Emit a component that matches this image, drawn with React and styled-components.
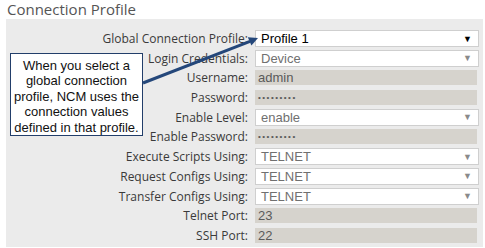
import styled, { createGlobalStyle } from 'styled-components';

const GlobalStyle = createGlobalStyle`
  html, body {
    margin: 0;
    padding: 0;
    background: #ffffff;
  }
`;

const Page = styled.div`
  position: relative;
  width: 485px;
  height: 248px;
  overflow: hidden;
`;

const Title = styled.h2`
  margin: 0;
  padding: 0 0 0 7px;
  height: 19px;
  font-family: 'Open Sans', sans-serif;
  font-weight: 400;
  font-size: 15px;
  line-height: 19px;
  color: #555;
`;

const Panel = styled.div`
  margin-left: 6px;
  width: 477px;
  height: 228px;
  box-sizing: border-box;
  padding: 11px 4px 3px 0;
  background: #ebebeb;
  display: grid;
  grid-template-columns: 242px 1fr;
  grid-auto-rows: 17px;
  column-gap: 7px;
  row-gap: 2.7px;
`;

const Label = styled.div`
  font-family: 'Open Sans', sans-serif;
  font-size: 12px;
  color: #3a3a3a;
  text-align: right;
  line-height: 17px;
  white-space: nowrap;
`;

const Select = styled.div`
  display: flex;
  align-items: center;
  justify-content: space-between;
  box-sizing: border-box;
  height: 17px;
  padding: 0 6px 0 5px;
  background: #fff;
  border: 1px solid #cfcfcf;
  font-family: 'Liberation Sans', Arial, sans-serif;
  font-size: 13px;
  color: ${(p) => (p.$active ? '#000' : '#707070')};
`;

const Caret = styled.span`
  font-size: 9px;
  color: ${(p) => (p.$active ? '#000' : '#8a8a8a')};
`;

const Field = styled.div`
  align-self: center;
  height: 15px;
  margin-right: 2px;
  padding-left: 3px;
  background: #d6d3cd;
  font-family: 'Liberation Sans', Arial, sans-serif;
  font-size: ${(p) => (p.$secret ? '8px' : '13px')};
  letter-spacing: ${(p) => (p.$secret ? '1.5px' : '0')};
  line-height: 15px;
  color: #5a5a5a;
`;

const Callout = styled.div`
  position: absolute;
  left: 10px;
  top: 53px;
  width: 133px;
  height: 83px;
  box-sizing: border-box;
  padding-top: 4px;
  background: #fff;
  border: 1px solid #223e6a;
  font-family: 'Liberation Sans', Arial, sans-serif;
  font-size: 13px;
  line-height: 15.4px;
  color: #111;
  text-align: center;
`;

const Pointer = styled.svg`
  position: absolute;
  left: 0;
  top: 0;
  pointer-events: none;
`;

const rows = [
  { label: 'Global Connection Profile:', kind: 'select', value: 'Profile 1', active: true },
  { label: 'Login Credentials:', kind: 'select', value: 'Device' },
  { label: 'Username:', kind: 'field', value: 'admin' },
  { label: 'Password:', kind: 'secret', value: '•••••••••' },
  { label: 'Enable Level:', kind: 'select', value: 'enable' },
  { label: 'Enable Password:', kind: 'secret', value: '•••••••••' },
  { label: 'Execute Scripts Using:', kind: 'select', value: 'TELNET' },
  { label: 'Request Configs Using:', kind: 'select', value: 'TELNET' },
  { label: 'Transfer Configs Using:', kind: 'select', value: 'TELNET' },
  { label: 'Telnet Port:', kind: 'field', value: '23' },
  { label: 'SSH Port:', kind: 'field', value: '22' },
];

export default function App() {
  return (
    <Page>
      <GlobalStyle />
      <Title>Connection Profile</Title>
      <Panel>
        {rows.map((row) => [
          <Label key={row.label + 'l'}>{row.label}</Label>,
          row.kind === 'select' ? (
            <Select key={row.label + 'v'} $active={row.active}>
              <span>{row.value}</span>
              <Caret $active={row.active}>▼</Caret>
            </Select>
          ) : (
            <Field key={row.label + 'v'} $secret={row.kind === 'secret'}>
              {row.value}
            </Field>
          ),
        ])}
      </Panel>
      <Callout>
        When you select a<br />
        global connection<br />
        profile, NCM uses the<br />
        connection values<br />
        defined in that profile.
      </Callout>
      <Pointer width="485" height="248">
        <line x1="143" y1="83" x2="250" y2="41.3" stroke="#24477a" strokeWidth="3" />
        <polygon points="258,38 251.4,45.4 247.8,37.2" fill="#24477a" />
      </Pointer>
    </Page>
  );
}
